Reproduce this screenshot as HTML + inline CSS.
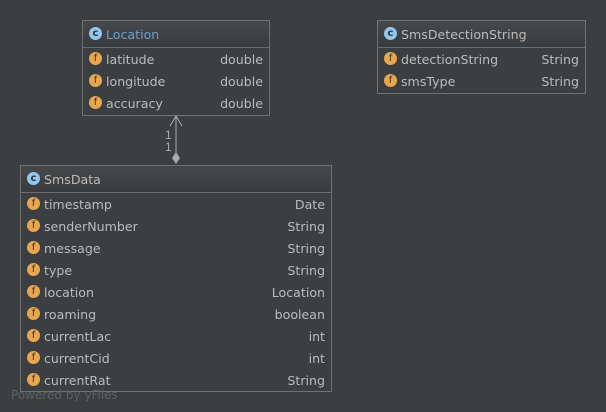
<!DOCTYPE html>
<html><head><style>
body{margin:0;width:606px;height:412px;background:#3c3f41;position:relative;overflow:hidden;font-family:"DejaVu Sans","Liberation Sans",sans-serif;font-size:12.6px;color:#bbbbbb}
.box{position:absolute;border:1px solid #6f7173;background:#3c3f41;box-sizing:border-box}
.hd{height:27px;border-bottom:1px solid #6a6c6e;background:linear-gradient(#46494b,#393b3d);position:relative;box-sizing:border-box}
.hd span{position:absolute;left:23px;top:6px}
.row{height:22px;position:relative}
.row .n{position:absolute;left:23px;top:4px}
.row .t{position:absolute;right:6px;top:4px}
.ic{position:absolute;left:6px;width:13px;height:13px;border-radius:50%;font-size:10px;line-height:13px;text-align:center;color:#333;font-weight:bold}
.c{background:#8fc7ee;top:6px}
.f{background:#e8a74e;top:4px;font-weight:normal;color:#333}
</style></head><body>

<div class="box" style="left:82px;top:20px;width:188px;height:96px">
<div class="hd"><div class="ic c">c</div><span style="color:#6a9fd0">Location</span></div>
<div class="row"><div class="ic f">f</div><span class="n">latitude</span><span class="t">double</span></div>
<div class="row"><div class="ic f">f</div><span class="n">longitude</span><span class="t">double</span></div>
<div class="row"><div class="ic f">f</div><span class="n">accuracy</span><span class="t">double</span></div>
</div>

<div class="box" style="left:377px;top:20px;width:209px;height:74px">
<div class="hd"><div class="ic c">c</div><span>SmsDetectionString</span></div>
<div class="row"><div class="ic f">f</div><span class="n">detectionString</span><span class="t">String</span></div>
<div class="row"><div class="ic f">f</div><span class="n">smsType</span><span class="t">String</span></div>
</div>

<div class="box" style="left:20px;top:165px;width:312px;height:227px">
<div class="hd"><div class="ic c">c</div><span>SmsData</span></div>
<div class="row"><div class="ic f">f</div><span class="n">timestamp</span><span class="t">Date</span></div>
<div class="row"><div class="ic f">f</div><span class="n">senderNumber</span><span class="t">String</span></div>
<div class="row"><div class="ic f">f</div><span class="n">message</span><span class="t">String</span></div>
<div class="row"><div class="ic f">f</div><span class="n">type</span><span class="t">String</span></div>
<div class="row"><div class="ic f">f</div><span class="n">location</span><span class="t">Location</span></div>
<div class="row"><div class="ic f">f</div><span class="n">roaming</span><span class="t">boolean</span></div>
<div class="row"><div class="ic f">f</div><span class="n">currentLac</span><span class="t">int</span></div>
<div class="row"><div class="ic f">f</div><span class="n">currentCid</span><span class="t">int</span></div>
<div class="row"><div class="ic f">f</div><span class="n">currentRat</span><span class="t">String</span></div>
</div>

<svg style="position:absolute;left:0;top:0" width="606" height="412">
<line x1="176" y1="116" x2="176" y2="153" stroke="#aaaaaa" stroke-width="1"/>
<polyline points="170,126 176,116 182,126" fill="none" stroke="#aaaaaa" stroke-width="1"/>
<polygon points="176,152 180,158 176,164 172,158" fill="#aaaaaa"/>
<text x="165" y="139" fill="#aaaaaa" font-size="12" font-family="Liberation Sans,sans-serif">1</text>
<text x="165" y="151" fill="#aaaaaa" font-size="12" font-family="Liberation Sans,sans-serif">1</text>
</svg>

<div style="position:absolute;left:11px;top:388px;font-size:12px;color:#5d6063">Powered by yFiles</div>
</body></html>
